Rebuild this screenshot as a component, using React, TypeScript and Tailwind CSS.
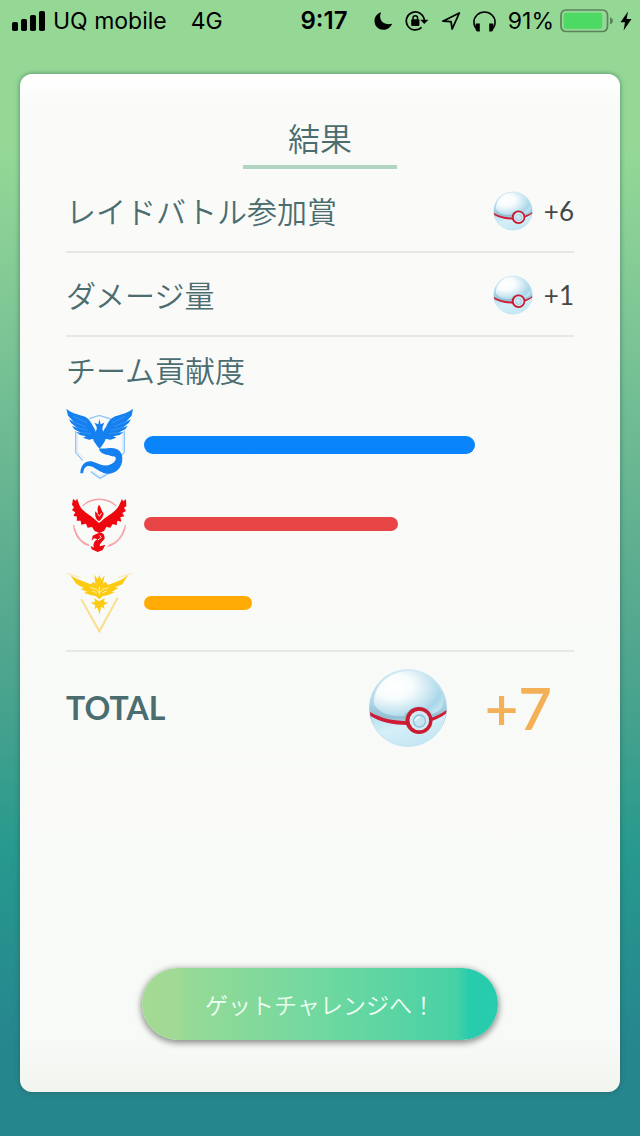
import React from "react";

const jp = "font-['Noto_Sans_CJK_JP',sans-serif]";

function Signal() {
  return (
    <svg viewBox="0 0 33 20" className="h-5 w-[33px]" aria-hidden="true">
      <rect x="0" y="11" width="6" height="9" rx="1.8" />
      <rect x="9" y="8" width="6" height="12" rx="1.8" />
      <rect x="18" y="4" width="6" height="16" rx="1.8" />
      <rect x="27" y="0" width="6" height="20" rx="1.8" />
    </svg>
  );
}

function Moon() {
  return (
    <svg viewBox="0 0 19 18" className="h-[18px] w-[19px]" aria-hidden="true">
      <path d="M7.2 0.3C4 6.500 8 14.200 18.200 11.700C16 16 12.800 17.800 9.400 17.800C4.400 17.800 0.500 14 0.500 9C0.500 5 3.200 1.500 7.200 0.300Z" />
    </svg>
  );
}

function RotationLock() {
  return (
    <svg viewBox="0 0 24 20" className="h-5 w-6" aria-hidden="true">
      <path d="M19.300 9.200A9 9 0 1 0 16.600 16.400" fill="none" stroke="black" strokeWidth="1.700" />
      <path d="M15.200 8.800H23.400L19.300 13Z" />
      <rect x="6.200" y="8.300" width="8.200" height="6.700" rx="1" />
      <path d="M8 8.700V7A2.300 2.300 0 0 1 12.600 7V8.700" fill="none" stroke="black" strokeWidth="1.500" />
    </svg>
  );
}

function Arrow() {
  return (
    <svg viewBox="0 0 20 18" className="h-[18px] w-5" aria-hidden="true">
      <path d="M18.300 1L1.800 9.200L10 9.700L11.200 17Z" fill="none" stroke="black" strokeWidth="1.800" strokeLinejoin="round" />
    </svg>
  );
}

function Headphones() {
  return (
    <svg viewBox="0 0 23 21" className="h-[21px] w-[23px]" aria-hidden="true">
      <path d="M2.200 16.500C1.200 14.500 0.900 13 0.900 11.300A10.600 10.300 0 0 1 22.100 11.300C22.100 13 21.800 14.500 20.800 16.500" fill="none" stroke="black" strokeWidth="1.600" />
      <path d="M2.800 12.500H6.800V20.500H4.600C3.400 20.500 2.400 18.500 2 16.500ZM20.200 12.500H16.200V20.500H18.400C19.600 20.500 20.600 18.500 21 16.500Z" />
    </svg>
  );
}

function Battery() {
  return (
    <svg viewBox="0 0 54 24" className="h-6 w-[54px]" aria-hidden="true">
      <rect x="1" y="1" width="46.500" height="21.500" rx="5" fill="none" stroke="#5a835b" strokeWidth="1.700" />
      <rect x="3.700" y="3.700" width="38.500" height="16" rx="2.500" fill="#4cd964" />
      <path d="M50 8.200C54 9.500 54 14 50 15.300Z" fill="#5a835b" />
    </svg>
  );
}

function Bolt() {
  return (
    <svg viewBox="0 0 12 20" className="h-5 w-3" aria-hidden="true">
      <path d="M8 0.500L0.500 11.300H5L3.600 19.500L11.500 8H6.600Z" />
    </svg>
  );
}

function Ball({ id, className }: { id: string; className: string }) {
  return (
    <svg viewBox="0 0 80 80" className={className} role="img" aria-label="プレミアボール">
      <defs>
        <linearGradient id={`${id}-base`} x1="0.5" y1="0" x2="0.5" y2="1">
          <stop offset="0" stopColor="#d3ebf4" />
          <stop offset="0.4" stopColor="#b3daea" />
          <stop offset="0.62" stopColor="#93bfd0" />
          <stop offset="0.75" stopColor="#c2e5f2" />
          <stop offset="1" stopColor="#c2e5f2" />
        </linearGradient>
        <radialGradient id={`${id}-shine`} cx="0.28" cy="0.34" r="0.8">
          <stop offset="0" stopColor="#ffffff" />
          <stop offset="0.35" stopColor="#f7fcfd" />
          <stop offset="0.65" stopColor="#cde8f2" />
          <stop offset="0.88" stopColor="#a9d6e8" />
          <stop offset="1" stopColor="#bfe3f0" />
        </radialGradient>
        <linearGradient id={`${id}-low`} x1="0" y1="0" x2="0.8" y2="1">
          <stop offset="0" stopColor="#b3deee" />
          <stop offset="0.45" stopColor="#d5eff8" />
          <stop offset="1" stopColor="#c2e5f2" />
        </linearGradient>
      </defs>
      <circle cx="40" cy="40" r="39" fill={`url(#${id}-base)`} />
      <path d="M6 36C5 20 18 3 42 3C62 3 75 19 75 34C75 40 71 44 64 46C56 34 42 38 36 48C24 49 11 46 6 36Z" fill={`url(#${id}-shine)`} />
      <path d="M2 47C15 54 28 56 40 56C55 56 68 52 78.500 45A39 39 0 0 1 2 47Z" fill={`url(#${id}-low)`} />
      <path d="M2 44C14 51 27 53 40 53C55 53 68 50 78.500 42L78 45.500C68 53 54 57 40 57C25 57 12 54 2.500 48Z" fill="#cf1b35" />
      <circle cx="51" cy="52.500" r="13.500" fill="#c91b32" />
      <circle cx="51.300" cy="52.500" r="9.800" fill="#d3eaf3" />
      <circle cx="51.500" cy="53" r="6" fill="#c5e5f1" stroke="#8cc3dc" strokeWidth="1.300" />
      <path d="M47.500 53A4 4 0 0 1 52 49.300" fill="none" stroke="#f4fcff" strokeWidth="1.500" />
    </svg>
  );
}

function Mystic() {
  return (
    <svg viewBox="33 24 204 225" className="h-[75px] w-[68px]" role="img" aria-label="ミスティック">
      <path d="M103 59L133 49L167 60M62 95V160L83 185M208 95V160L192 177M107 218L135 238L171 217" fill="none" stroke="#91c7f8" strokeWidth="4" />
      <path d="M67 101V157L86 178M203 101V155M112 216L135 232L162 218" fill="none" stroke="#bfe0fb" strokeWidth="2" />
      <g fill="#1580f0">
        <path d="M34 29C49 43 67 45 84 51C101 57 107 67 114 82L121 94L117 119L102 122L84 116L93 112L75 108L63 99L78 101L58 91L51 80L66 86L48 72L42 60L56 68L39 50Z" />
        <path d="M234 29C218 43 200 45 183 51C167 57 160 67 154 82L146 94L150 119L167 122L184 116L175 112L194 108L206 99L190 101L211 91L218 80L203 86L221 72L228 60L213 68L230 50Z" />
        <path d="M133 60L137 76L148 71L143 83L142 92L155 108L150 126L138 145L133 148L129 145L116 126L112 108L125 92L125 83L118 71L130 76Z" />
        <path d="M132 148C151 151 169 144 182 149C198 153 205 170 201 190C196 211 180 225 158 224C141 223 127 211 112 203C96 197 87 202 84 223L76 223C77 194 95 182 114 188C134 195 149 205 167 196C177 191 184 183 182 176C180 170 173 174 166 170C151 166 134 165 132 148Z" />
      </g>
      <path d="M55 51L96 72M52 67L91 83M62 85L100 94M79 101L107 104M211 51L171 72M216 67L177 83M205 85L168 94M189 101L162 104" fill="none" stroke="#4c9ff6" strokeWidth="2" />
    </svg>
  );
}

function Valor() {
  return (
    <svg viewBox="33 5 204 225" className="h-[75px] w-[68px]" role="img" aria-label="ヴァーラー">
      <path d="M83 65C109 38 156 38 184 65M56 122C59 153 77 177 103 184M211 122C207 154 188 178 158 186" fill="none" stroke="#f5a1a6" strokeWidth="4" />
      <path d="M59 133C67 158 82 174 101 181M207 133C199 159 183 175 162 182" fill="none" stroke="#ee858c" strokeWidth="2" />
      <g fill="#ef0710">
        <path d="M54 44L63 50L66 42L72 59C80 82 102 88 119 105L126 111L132 116L139 111L147 103C168 87 186 80 195 57L201 43L204 51L213 45L214 66L207 70L213 80L202 86L208 96L196 99L199 112L187 109L185 123L173 119L166 130L154 128L147 140L133 146L119 140L111 128L98 130L93 118L79 121L77 109L65 109L66 97L55 94L61 84L51 78L57 69L51 61Z" />
        <path d="M132 61C141 73 138 80 146 87C145 96 140 105 132 111C122 106 119 94 121 81L128 89C129 78 125 72 132 61Z" />
        <path d="M134 145C145 144 149 151 149 163C141 174 132 178 135 186L151 181L143 197L128 203L110 195L107 185L117 190C113 179 118 170 127 165L117 162L110 169L113 154L125 148Z" />
      </g>
      <path d="M128 88L133 96L140 86M134 153L139 160L128 167" fill="none" stroke="#ffd7d8" strokeWidth="3" />
    </svg>
  );
}

function Instinct() {
  return (
    <svg viewBox="33 17 204 225" className="h-[75px] w-[68px]" role="img" aria-label="インスティンクト">
      <path d="M34 42L78 55M233 42L188 55" fill="none" stroke="#fbeaba" strokeWidth="4" />
      <path d="M79 120L133 216L188 115" fill="none" stroke="#f8df90" strokeWidth="6" />
      <g fill="#fccb12">
        <path d="M46 48L65 58L107 75L116 67L121 75L118 46L128 60L133 47L139 61L149 48L144 73L152 67L159 77L198 62L219 48L202 75L181 83L190 86L171 97L179 99L157 108L144 110L133 120L122 110L109 108L87 101L96 97L77 90L86 86L64 74Z" />
        <path d="M118 117L132 126L149 117L147 128L160 130L146 138L149 148L138 142L134 166L127 144L118 150L121 138L106 130L120 128Z" />
      </g>
      <path d="M106 85L124 90L133 101L143 90L160 85M133 82V107M112 95L125 100M155 95L142 100" fill="none" stroke="#fff1ad" strokeWidth="3" />
    </svg>
  );
}

const rewards = [
  { id: "raid", label: "レイドバトル参加賞", value: "+6" },
  { id: "damage", label: "ダメージ量", value: "+1" },
];

const teams = [
  { name: "mystic", Logo: Mystic, share: 77, bar: "h-[18px] bg-[#0a84fb]" },
  { name: "valor", Logo: Valor, share: 59, bar: "h-[14px] bg-[#e84646]" },
  { name: "instinct", Logo: Instinct, share: 25, bar: "h-[14px] bg-[#ffaa05]" },
];

export default function App() {
  return (
    <div className="flex min-h-screen flex-col bg-[linear-gradient(to_bottom,#95d896_0%,#95d896_13%,#74bf94_34%,#56a98f_54%,#43a18d_64%,#27998e_75%,#26868e_92%)]">
      <header className="grid h-[42px] grid-cols-[1fr_auto_1fr] items-center pl-3 pr-2 font-['Inter',sans-serif] text-[23px] text-black">
        <div className="flex items-center gap-2">
          <Signal />
          <span>UQ mobile</span>
          <span className="ml-4">4G</span>
        </div>
        <time className="pl-1 text-2xl font-semibold">9:17</time>
        <div className="flex items-center justify-end gap-3">
          <Moon />
          <RotationLock />
          <Arrow />
          <Headphones />
          <div className="flex items-center gap-[6px]">
            <span>91%</span>
            <Battery />
            <Bolt />
          </div>
        </div>
      </header>

      <main className={`mx-5 mb-11 mt-8 flex flex-1 flex-col rounded-xl bg-[linear-gradient(to_bottom,#ffffff_0,#fafbf9_28px,#f8faf7_95%,#f2f4ef_100%)] px-[46px] pb-[52px] pt-[43px] text-[#4b6d70] shadow-[0_0_4px_1px_rgba(40,90,80,0.45)] ${jp}`}>
        <h1 className="w-[154px] self-center border-b-4 border-[#b0d4c0] pb-2 text-center text-[32px] font-[350] leading-10">
          結果
        </h1>

        <dl>
          {rewards.map((r) => (
            <div key={r.id} className="flex h-[84px] items-center justify-between border-b-2 border-[#e6e8e6]">
              <dt className="text-[30px] font-[350] leading-10">{r.label}</dt>
              <dd className="flex items-center gap-[11px] pt-[2px] font-['Lato',sans-serif] text-[26px] leading-8 text-[#444848]">
                <Ball id={r.id} className="size-10" />
                {r.value}
              </dd>
            </div>
          ))}
        </dl>

        <section className="border-b-2 border-[#e6e8e6] pb-2">
          <h2 className="pb-[14px] pt-[10px] text-[30px] font-[350] leading-[44px]">チーム貢献度</h2>
          <ul>
            {teams.map(({ name, Logo, share, bar }) => (
              <li key={name} className="flex h-[79px] items-center gap-[10px]">
                <Logo />
                <div className="flex-1">
                  <div className={`rounded-full ${bar}`} style={{ width: `${share}%` }} />
                </div>
              </li>
            ))}
          </ul>
        </section>

        <div className="flex h-[112px] items-center font-['Lato',sans-serif] font-bold">
          <span className="flex-1 text-[32px]">TOTAL</span>
          <Ball id="total" className="size-20" />
          <span className="w-[126px] pr-[22px] text-right text-[58px] font-semibold leading-none text-[#f4b056]">+7</span>
        </div>

        <button
          type="button"
          className="mt-auto h-[72px] w-[356px] max-w-full self-center rounded-full bg-[linear-gradient(to_right,#a4da94_0%,#a0da94_10%,#96da96_13%,#6ed8a0_52%,#48d1a6_88%,#26ccac_92%,#26ccac_100%)] text-[23px] font-[350] text-[#edfff2] shadow-[0_2px_6px_1px_rgba(60,70,65,0.6)]"
        >
          ゲットチャレンジへ！
        </button>
      </main>
    </div>
  );
}
